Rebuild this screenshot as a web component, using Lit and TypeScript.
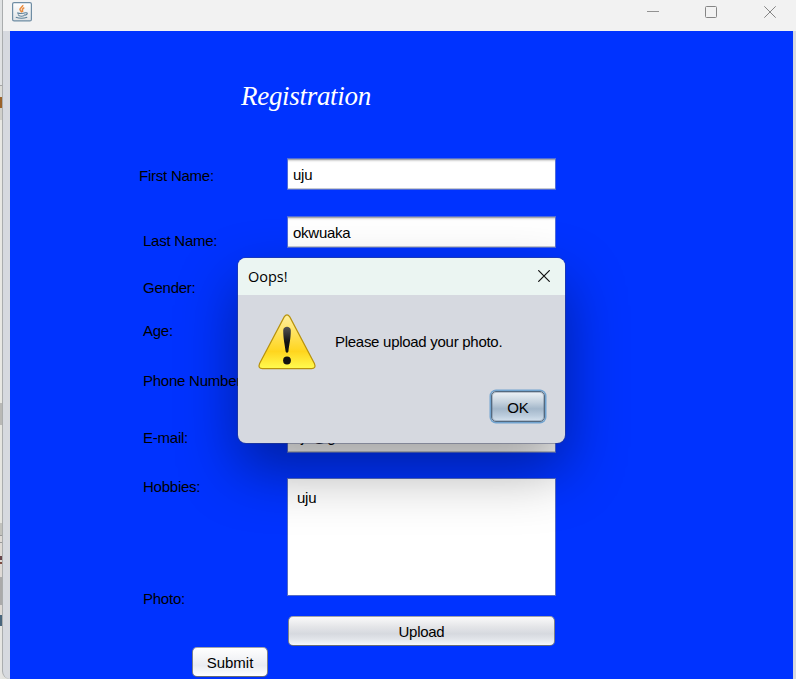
import { LitElement, html, css, svg } from "lit";
import { customElement, property } from "lit/decorators.js";

@customElement("warning-dialog")
class WarningDialog extends LitElement {
  @property() heading = "";
  @property() message = "";

  static styles = css`
    :host {
      display: flex;
      flex-direction: column;
      box-sizing: border-box;
      width: 327px;
      height: 185px;
      border-radius: 8px;
      overflow: hidden;
      background: #d6d9e0;
      color: #000;
      box-shadow: 0 0 0 1px rgba(60, 70, 110, 0.4), 0 26px 60px rgba(0, 0, 0, 0.38);
    }
    header {
      display: flex;
      align-items: center;
      justify-content: space-between;
      flex: none;
      height: 37px;
      padding: 0 15px 0 10px;
      background: #ebf5f2;
      font: 14.5px "Open Sans", sans-serif;
    }
    .close { margin-bottom: 2px; }
    .body {
      display: flex;
      padding: 17px 0 0 19px;
      height: 60px;
    }
    .message {
      margin: 21px 0 0 18px;
      line-height: 18px;
      letter-spacing: -0.28px;
      white-space: nowrap;
    }
    .actions {
      display: flex;
      justify-content: flex-end;
      padding: 19px 20px 0 0;
    }
    button {
      width: 54px;
      height: 31px;
      padding: 1px 0 0;
      border: 1px solid #53697f;
      border-radius: 5px;
      box-shadow: 0 0 0 1.5px #72a4d0, inset 0 0 0 1px rgba(70, 90, 115, 0.3);
      background: linear-gradient(#eef2f6, #c5d2de 35%, #a3b7ca 58%, #bccddd 82%, #d5e2ee);
      font: inherit;
      color: #000;
    }
    svg { display: block; flex: none; }
  `;

  render() {
    return html`
      <header>
        <span>${this.heading}</span>
        <svg class="close" width="12" height="12" viewBox="0 0 12 12">
          <path d="M.3 .3 11.7 11.7M11.7 .3 .3 11.7" stroke="#111" stroke-width="1.2" />
        </svg>
      </header>
      <div class="body">
        <svg width="60" height="60" viewBox="0 0 60 60">
          <defs>
            <linearGradient id="sign" x2="0" y2="1">
              <stop offset="0" stop-color="#fff0a0" />
              <stop offset=".4" stop-color="#ffe052" />
              <stop offset=".68" stop-color="#ffd51e" />
              <stop offset="1" stop-color="#fffb50" />
            </linearGradient>
            <linearGradient id="mark" x2="0" y2="1">
              <stop offset="0" stop-color="#555" />
              <stop offset=".6" stop-color="#111" />
            </linearGradient>
          </defs>
          <path d="M27.2 4.2Q30 .2 32.8 4.2L57.4 50.8Q59.4 55.8 54.6 56H5.4Q.6 55.8 2.6 50.8Z"
            fill="url(#sign)" stroke="#b8920c" stroke-width="1.2" transform="translate(0 .7)" />
          <path d="M26.2 18.5C26.2 13.5 33.8 13.5 33.8 18.5C33.8 27 32.2 32 31.4 39.5Q30 42 28.6 39.5C27.8 32 26.2 27 26.2 18.5Z" fill="url(#mark)" />
          <circle cx="30" cy="48.5" r="3.9" fill="#111" />
        </svg>
        <div class="message">${this.message}</div>
      </div>
      <div class="actions"><button>OK</button></div>
    `;
  }
}

@customElement("app-root")
class AppRoot extends LitElement {
  static styles = css`
    :host {
      display: flex;
      position: relative;
      box-sizing: border-box;
      width: 796px;
      height: 679px;
      overflow: hidden;
      font: 15px "Liberation Sans", Arial, sans-serif;
      color: #000;
      background: #e3e3df;
    }
    .behind {
      flex: none;
      width: 2px;
      background: linear-gradient(#e0e2e3 85px, #a5a5a5 85px 86px, #dcdcd7 86px 97px, #9a6228 97px 108px,
        #d0d0cb 108px 120px, #e8e8e3 120px 403px, #b9b9b6 403px 425px, #e5e5e0 425px 523px,
        #c2c2bd 523px 535px, #999 535px 536px, #dedad6 536px 542px, #999 542px 543px, #dedad6 543px 556px,
        #66444a 556px 560px, #dedad6 560px 562px, #7c4a40 562px 564px, #dedad6 564px 577px, #aaa 577px 605px,
        #dedad6 605px 615px, #48657c 615px 626px, #e5e5e2 626px);
    }
    .window {
      display: flex;
      flex-direction: column;
      box-sizing: border-box;
      flex: 1;
      border-left: 1px solid #aaadae;
      border-bottom-left-radius: 8px;
      background: #d6d9df;
    }
    .titlebar {
      display: flex;
      align-items: center;
      justify-content: space-between;
      flex: none;
      box-sizing: border-box;
      height: 31px;
      padding: 0 20px 7px 9px;
      background: #f2f2f2;
    }
    .controls { display: flex; gap: 46px; }
    .controls svg:last-child { margin-left: 1px; }
    .titlebar svg { display: block; }
    .client {
      flex: 1;
      margin: 0 3px 0 7px;
      background: #0033ff;
    }
    h1 {
      margin: 0;
      padding: 46px 0 0 231px;
      height: 34px;
      font: italic 27px/38px "Monotype Corsiva", "Liberation Serif", serif;
      letter-spacing: -0.3px;
      color: #fff;
    }
    .form { display: flex; align-items: flex-start; }
    .labels {
      display: flex;
      flex-direction: column;
      width: 145px;
      padding: 56px 0 0 133px;
      line-height: 18px;
      letter-spacing: -0.24px;
      white-space: nowrap;
    }
    .first { margin-left: -4px; }
    .last { margin-top: 47px; }
    .gender { margin-top: 29px; }
    .age { margin-top: 25px; }
    .phone { margin-top: 32px; }
    .email { margin-top: 39px; }
    .hobbies { margin-top: 31px; }
    .photo { margin-top: 94px; }
    .fields {
      display: flex;
      flex-direction: column;
      width: 267px;
      padding-top: 48px;
    }
    .fields input, .fields textarea {
      box-sizing: border-box;
      width: 267px;
      border: 0;
      border-radius: 0;
      outline: 0;
      font: inherit;
      letter-spacing: -0.25px;
      color: #000;
      background: #fff;
    }
    .fields input {
      height: 30px;
      padding: 1px 5px 0;
      box-shadow: 0 0 0 1px rgba(145, 155, 185, 0.55), inset 0 1px 0 #a8a9ac, inset 0 3px 2px -1px #d0d0d0, inset 0 -1px 0 #c7cad0;
    }
    .fields .surname { margin-top: 28px; }
    .fields .mail { margin-top: 175px; padding: 0 5px 1px; }
    .fields textarea {
      display: block;
      resize: none;
      overflow: hidden;
      height: 116px;
      margin-top: 27px;
      padding: 10px 9px;
      line-height: 18px;
      box-shadow: 0 0 0 1px rgba(115, 130, 175, 0.75);
    }
    .button {
      box-sizing: border-box;
      height: 30px;
      padding: 1px 0 0;
      border: 1px solid #7c8088;
      border-color: #a1a4aa #7c8088 #686d76;
      border-radius: 5px;
      font: inherit;
      color: #000;
    }
    .upload {
      margin-top: 21px;
      letter-spacing: -0.28px;
      background: linear-gradient(#fafafa, #e4e5e8 35%, #d6d9df 60%, #e1e4e9 78%, #f6f8fc);
    }
    .submit {
      display: block;
      width: 76px;
      margin: 1px 0 0 182px;
      background: linear-gradient(#fff, #f2f3f6 40%, #e9ecf2 62%, #fff);
    }
    warning-dialog {
      position: absolute;
      left: 238px;
      top: 258px;
    }
  `;

  private javaIcon() {
    return svg`
      <svg width="20" height="20" viewBox="0 0 20 20">
        <defs><linearGradient id="tile" x2="0" y2="1">
          <stop offset="0" stop-color="#fff"/><stop offset="1" stop-color="#dfe3e6"/>
        </linearGradient></defs>
        <rect x=".6" y=".6" width="18.8" height="18.3" rx="1.5" fill="url(#tile)" stroke="#6f8da4" stroke-width="1.2"/>
        <path d="M10.8 3C11.4 5 6.8 6 8.2 8.2L9.8 10.4M12.3 5.6C9.2 7 10.7 8 10.6 10" fill="none" stroke="#ec8b3c" stroke-width="1.5"/>
        <path d="M5.2 10.9Q9 12 13.4 10.8M6 12.4Q7 14.2 9.5 14.2Q12 14.2 13 12.4M13.4 10.8Q16 10.5 15 12.2Q14.4 13 13 13.3M3.8 15.2Q9.5 17.4 15.2 15.2" fill="none" stroke="#5d8199" stroke-width="1.1"/>
      </svg>`;
  }

  render() {
    return html`
      <div class="behind"></div>
      <div class="window">
        <div class="titlebar">
          ${this.javaIcon()}
          <div class="controls">
            <svg width="12" height="12" viewBox="0 0 12 12"><path d="M0 5.5H12" stroke="#929292" /></svg>
            <svg width="12" height="12" viewBox="0 0 12 12"><rect x=".5" y=".5" width="11" height="11" rx="1" fill="none" stroke="#858585" /></svg>
            <svg width="12" height="12" viewBox="0 0 12 12"><path d="M.3 .3 11.7 11.7M11.7 .3 .3 11.7" stroke="#858585" /></svg>
          </div>
        </div>
        <div class="client">
          <h1>Registration</h1>
          <div class="form">
            <div class="labels">
              <label class="first">First Name:</label>
              <label class="last">Last Name:</label>
              <label class="gender">Gender:</label>
              <label class="age">Age:</label>
              <label class="phone">Phone Number:</label>
              <label class="email">E-mail:</label>
              <label class="hobbies">Hobbies:</label>
              <label class="photo">Photo:</label>
            </div>
            <div class="fields">
              <input class="name" .value=${"uju"} />
              <input class="surname" .value=${"okwuaka"} />
              <input class="mail" .value=${"uju@gmail.com"} />
              <textarea .value=${"uju"}></textarea>
              <button class="button upload">Upload</button>
            </div>
          </div>
          <button class="button submit">Submit</button>
        </div>
      </div>
      <warning-dialog heading="Oops!" message="Please upload your photo."></warning-dialog>
    `;
  }
}
